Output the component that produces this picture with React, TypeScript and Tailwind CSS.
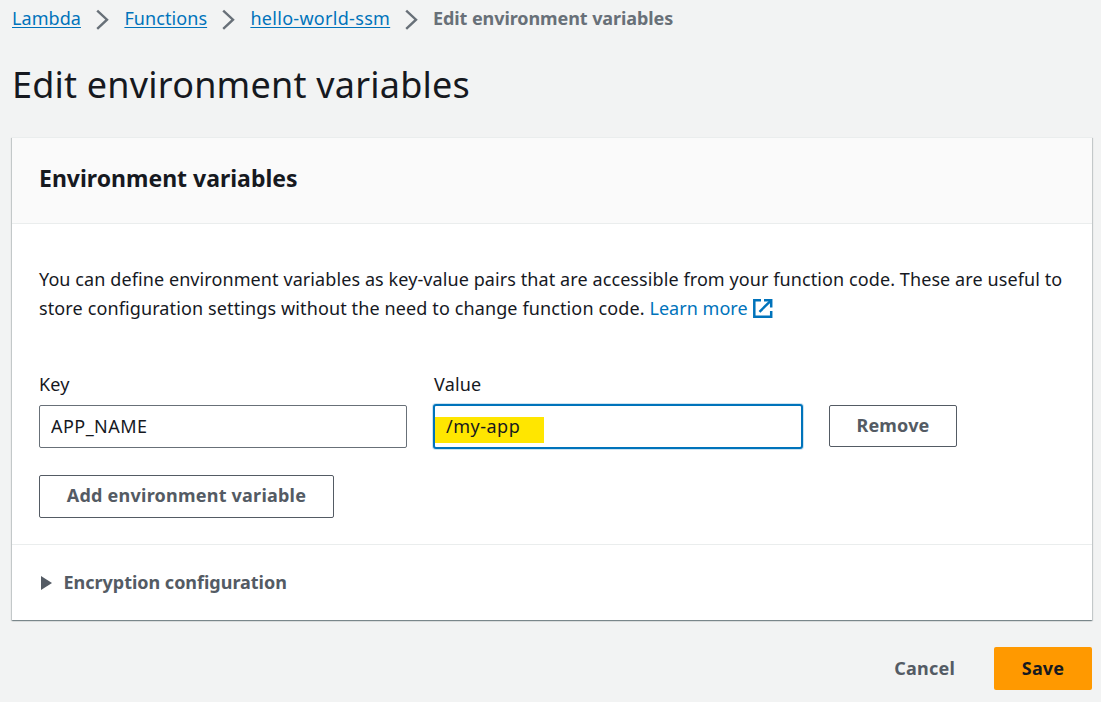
import { ReactNode } from "react";

function Chevron() {
  return (
    <svg className="mt-[9px] h-[22px] w-[14px] shrink-0" viewBox="0 0 14 22" fill="none" stroke="#687078" strokeWidth="2.4">
      <path d="M1.2 1.6 L11 10.7 L1.2 19.8" />
    </svg>
  );
}

function Crumb({ children, className }: { children: ReactNode; className: string }) {
  return (
    <a
      href="#"
      className={`block text-[18px] leading-[28px] whitespace-nowrap text-[#0073bb] underline decoration-1 underline-offset-[2px] [text-decoration-skip-ink:none] ${className}`}
    >
      {children}
    </a>
  );
}

function ExternalIcon() {
  return (
    <svg className="ml-[5px] inline-block h-5 w-5 align-[-4px]" viewBox="0 0 20 20" fill="none" stroke="#0073bb" strokeWidth="2.5">
      <path d="M8 1.3 H1.3 V17.8 H18.2 V12" />
      <path d="M11 1.3 H18.2 V8.6" />
      <path d="M17.6 1.9 L6.5 12.8" />
    </svg>
  );
}

export default function App() {
  return (
    <div className="flex h-[702px] w-[1101px] flex-col overflow-hidden bg-[#f2f3f3] pr-[9px] pl-3 font-['Noto_Sans',sans-serif] text-[18px] text-[#16191f]">
      <nav className="flex h-[38px] items-start pt-[4px]">
        <Crumb className="w-[69px] tracking-[0.06px]">Lambda</Crumb>
        <div className="-mt-[4px] ml-[15px] w-[28.4px]"><Chevron /></div>
        <Crumb className="w-[83px] tracking-[0.08px]">Functions</Crumb>
        <div className="-mt-[4px] ml-[14.6px] w-[28.4px]"><Chevron /></div>
        <Crumb className="w-[140px] tracking-[0.3px]">hello-world-ssm</Crumb>
        <div className="-mt-[4px] ml-[14.6px] w-[28px]"><Chevron /></div>
        <span className="leading-[28px] font-bold tracking-[-0.08px] whitespace-nowrap text-[#687078]">
          Edit environment variables
        </span>
      </nav>

      <h1 className="h-[99px] pt-[22px] text-[36px] leading-[50px] tracking-[0.21px] whitespace-nowrap">
        Edit environment variables
      </h1>

      <section className="flex h-[483px] shrink-0 flex-col border-t border-[#eaeded] bg-white shadow-[0_1px_1px_0_rgba(0,28,36,0.3),1px_1px_1px_0_rgba(0,28,36,0.15),-1px_1px_1px_0_rgba(0,28,36,0.15)]">
        <header className="flex h-[86px] items-center border-b border-[#eaeded] bg-[#fafafa] pl-[27px]">
          <h2 className="pb-[6px] text-[23px] leading-[32px] font-bold">Environment variables</h2>
        </header>

        <div className="h-[320px] pt-[41px] pl-[27px]">
          <p className="leading-[29px] whitespace-nowrap">
            <span className="block tracking-[0.09px]">
              You can define environment variables as key-value pairs that are accessible from your function code. These are useful to
            </span>
            <span className="block h-[29px] tracking-[0.12px]">
              store configuration settings without the need to change function code.{" "}
              <a href="#" className="tracking-[0.03px] text-[#0073bb]">
                Learn more
                <ExternalIcon />
              </a>
            </span>
          </p>

          <div className="mt-[46px] flex">
            <label className="w-[368px]">
              <span className="block h-[36px] leading-[30px] tracking-[0.2px]">Key</span>
              <input
                className="block h-[43px] w-[368px] rounded-[2px] border border-[#687078] bg-white px-[11px] pb-[2px] tracking-[0.45px] outline-none"
                defaultValue="APP_NAME"
              />
            </label>
            <label className="ml-[26px] w-[370px]">
              <span className="block h-[35px] pl-[1px] leading-[30px] tracking-[0.2px]">Value</span>
              <span className="flex h-[45px] items-start rounded-[3px] border-2 border-[#0073bb] bg-white pt-[11px] shadow-[0_0_0_1px_rgba(0,115,187,0.2)]">
                <span className="h-[25.5px] w-[109px] bg-[#ffe600] pl-[11px] leading-[18px] tracking-[0.5px]">/my-app</span>
              </span>
            </label>
            <button className="mt-[36px] ml-[26px] h-[42px] w-[128px] rounded-[2px] border border-[#545b64] bg-white pb-[2px] font-bold tracking-[0.17px] text-[#545b64]">
              Remove
            </button>
          </div>

          <button className="mt-[26px] block h-[43px] w-[295px] rounded-[2px] border border-[#545b64] bg-white pb-[2px] font-bold tracking-[0.23px] text-[#545b64]">
            Add environment variable
          </button>
        </div>

        <div className="flex h-[76px] items-center border-t border-[#eaeded] pl-[29px] font-bold text-[#545b64]">
          <svg className="h-[14px] w-[11px]" viewBox="0 0 11 14" fill="#545b64">
            <path d="M0 0 L11 7 L0 14 Z" />
          </svg>
          <span className="ml-[11.5px] tracking-[-0.02px]">Encryption configuration</span>
        </div>
      </section>

      <footer className="mt-[27px] flex h-[43px] items-center justify-end">
        <button className="mr-[39px] font-bold tracking-[0.2px] text-[#545b64]">Cancel</button>
        <button className="h-[43px] w-[98px] rounded-[2px] bg-[#ff9900] font-bold tracking-[0.15px]">Save</button>
      </footer>
    </div>
  );
}
